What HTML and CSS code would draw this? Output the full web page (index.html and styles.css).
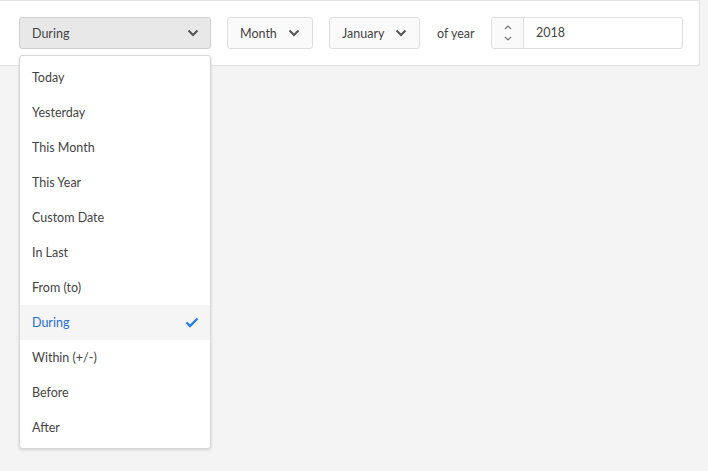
FILE: index.html
```html
<!DOCTYPE html>
<html>
<head>
<meta charset="utf-8">
<link rel="stylesheet" href="styles.css">
</head>
<body>
<div class="panel">
  <div class="row">
    <button class="select select-main">
      <span>During</span>
      <svg class="chev" width="12" height="8" viewBox="0 0 12 8"><path d="M1.5 1.5 L6 6 L10.5 1.5" fill="none" stroke="#555" stroke-width="2"/></svg>
    </button>
    <button class="select select-month">
      <span>Month</span>
      <svg class="chev" width="12" height="8" viewBox="0 0 12 8"><path d="M1.5 1.5 L6 6 L10.5 1.5" fill="none" stroke="#555" stroke-width="2"/></svg>
    </button>
    <button class="select select-jan">
      <span>January</span>
      <svg class="chev" width="12" height="8" viewBox="0 0 12 8"><path d="M1.5 1.5 L6 6 L10.5 1.5" fill="none" stroke="#555" stroke-width="2"/></svg>
    </button>
    <span class="label">of year</span>
    <div class="number">
      <div class="spin">
        <svg width="10" height="20" viewBox="0 0 10 20"><path d="M2 6 L5 3 L8 6" fill="none" stroke="#777" stroke-width="1.2"/><path d="M2 14 L5 17 L8 14" fill="none" stroke="#777" stroke-width="1.2"/></svg>
      </div>
      <div class="value">2018</div>
    </div>
  </div>
</div>
<ul class="menu">
  <li>Today</li>
  <li>Yesterday</li>
  <li>This Month</li>
  <li>This Year</li>
  <li>Custom Date</li>
  <li>In Last</li>
  <li>From (to)</li>
  <li class="active">During
    <svg class="check" width="14" height="11" viewBox="0 0 14 11"><path d="M1.5 5.5 L5 9 L12.5 1.5" fill="none" stroke="#2b7de9" stroke-width="2.4"/></svg>
  </li>
  <li>Within (+/-)</li>
  <li>Before</li>
  <li>After</li>
</ul>
</body>
</html>
```

FILE: styles.css
```css
html, body {
  margin: 0;
  padding: 0;
  height: 100%;
  background: #f4f4f4;
  font-family: Lato, "Open Sans", sans-serif;
  font-size: 12.5px;
  color: #444;
}
body {
  position: relative;
}
.panel {
  box-sizing: border-box;
  width: 700px;
  height: 66px;
  background: #fff;
  border: 1px solid #e3e3e3;
  border-left: none;
  border-radius: 0 0 3px 0;
}
.row {
  display: flex;
  align-items: center;
  padding: 16px 0 0 19px;
  gap: 16px;
}
.select {
  box-sizing: border-box;
  height: 32px;
  display: flex;
  align-items: center;
  justify-content: space-between;
  border: 1px solid #dedede;
  border-radius: 3px;
  background: #fafafa;
  font: inherit;
  color: #444;
  padding: 0 12px 0 12px;
  margin: 0;
  cursor: pointer;
}
.select-main {
  width: 192px;
  background: #e8e8e8;
  border-color: #cfcfcf;
  padding: 0 11px 0 12px;
}
.select-month {
  width: 86px;
}
.select-jan {
  width: 91px;
}
.chev {
  display: block;
}
.label {
  width: 38px;
  margin-left: 1px;
  white-space: nowrap;
  color: #444;
}
.number {
  box-sizing: border-box;
  width: 192px;
  height: 32px;
  display: flex;
  border: 1px solid #dedede;
  border-radius: 3px;
  background: #fff;
}
.spin {
  width: 31px;
  background: #fafafa;
  border-right: 1px solid #dedede;
  display: flex;
  align-items: center;
  justify-content: center;
  border-radius: 3px 0 0 3px;
}
.spin svg { display: block; }
.value {
  display: flex;
  align-items: center;
  padding-left: 12px;
  padding-bottom: 1px;
  color: #444;
}
.menu {
  position: absolute;
  top: 55px;
  left: 19px;
  z-index: 10;
  width: 192px;
  box-sizing: border-box;
  margin: 0;
  padding: 4px 0 3px;
  list-style: none;
  background: #fff;
  border: 1px solid #d6d6d6;
  border-radius: 3px;
  box-shadow: 0 1px 3px rgba(0,0,0,0.15);
}
.menu li {
  box-sizing: border-box;
  height: 35px;
  display: flex;
  align-items: center;
  justify-content: space-between;
  padding: 0 11px 1px 12px;
}
.menu li.active {
  background: #f5f5f5;
  color: #1f6fd6;
}
.check { display: block; }
```
